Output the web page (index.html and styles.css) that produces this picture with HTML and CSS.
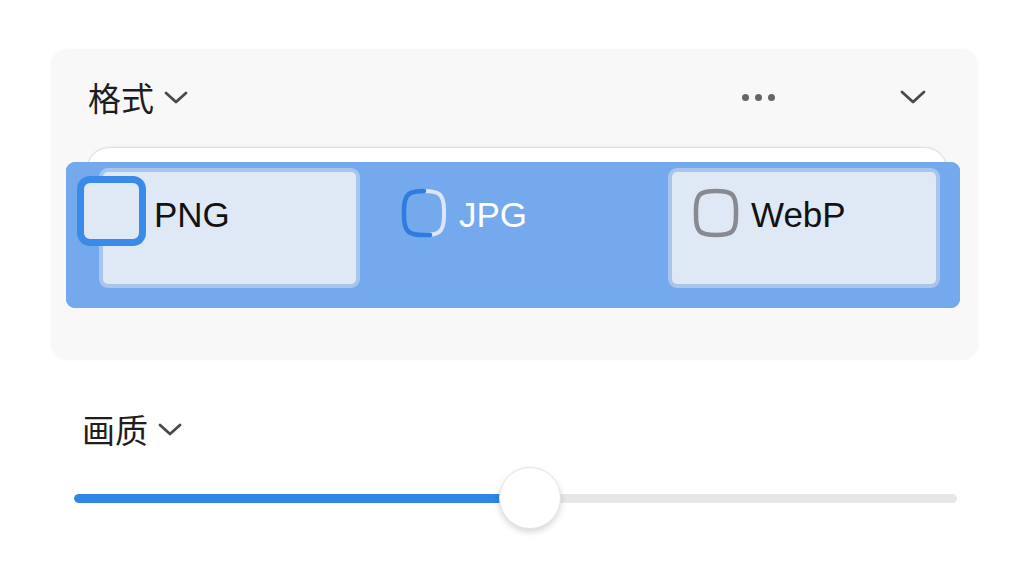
FILE: index.html
```html
<!DOCTYPE html>
<html lang="zh-CN">
<head>
<meta charset="utf-8">
<title>格式</title>
<link rel="stylesheet" href="styles.css">
</head>
<body>
<div class="page">
  <section class="card">
    <header class="card-head">
      <div class="title">格式
        <svg class="chev" width="24" height="14" viewBox="0 0 24 14"><path d="M2 2 L12 11 L22 2" fill="none" stroke="#4a4a4a" stroke-width="2.8" stroke-linecap="round" stroke-linejoin="round"/></svg>
      </div>
      <div class="head-actions">
        <span class="dots"><i></i><i></i><i></i></span>
        <svg class="chev-r" width="26" height="15" viewBox="0 0 26 15"><path d="M2 2 L13 12 L24 2" fill="none" stroke="#4a4a4a" stroke-width="2.8" stroke-linecap="round" stroke-linejoin="round"/></svg>
      </div>
    </header>
    <div class="options">
      <div class="opt opt-png">
        <span class="check"></span>
        <span class="opt-label dark">PNG</span>
      </div>
      <div class="opt opt-jpg">
        <svg class="radio" width="48" height="50" viewBox="0 0 48 50">
          <path d="M24 3 C38 3 44 5 44 22 L44 28 C44 45 38 47 24 47" fill="none" stroke="#dbe6f6" stroke-width="4"/>
          <path d="M24 3 C10 3 4 5 4 22 L4 28 C4 45 10 47 24 47 L30 47" fill="none" stroke="#2f7be0" stroke-width="4.5" stroke-linecap="round"/>
        </svg>
        <span class="opt-label light">JPG</span>
      </div>
      <div class="opt opt-webp">
        <svg class="radio" width="48" height="50" viewBox="0 0 48 50">
          <path d="M24 3 C40 3 44 6 44 22 L44 28 C44 44 40 47 24 47 C8 47 4 44 4 28 L4 22 C4 6 8 3 24 3 Z" fill="none" stroke="#878b91" stroke-width="4.5"/>
        </svg>
        <span class="opt-label dark">WebP</span>
      </div>
    </div>
  </section>

  <section class="quality">
    <div class="title title-q">画质
      <svg class="chev" width="24" height="14" viewBox="0 0 24 14"><path d="M2 2 L12 11 L22 2" fill="none" stroke="#4a4a4a" stroke-width="2.8" stroke-linecap="round" stroke-linejoin="round"/></svg>
    </div>
    <div class="slider">
      <div class="track"><div class="fill" style="width:456px"></div></div>
      <div class="thumb" style="left:425px"></div>
    </div>
  </section>
</div>
</body>
</html>
```

FILE: styles.css
```css
html, body {
  margin: 0;
  padding: 0;
  background: #ffffff;
}
body {
  font-family: "Liberation Sans", "Noto Sans CJK SC", sans-serif;
  color: #1a1a1a;
}
.page {
  width: 1024px;
  height: 576px;
  padding-top: 49px;
  box-sizing: border-box;
  overflow: hidden;
}
.card {
  margin-left: 51px;
  width: 927px;
  height: 311px;
  box-sizing: border-box;
  background: #f8f8f8;
  border-radius: 16px;
  box-shadow: 0 0 3px rgba(0,0,0,0.03);
  padding-top: 28px;
}
.card-head {
  display: flex;
  align-items: center;
  justify-content: space-between;
  padding: 0 52px 0 37px;
  height: 40px;
}
.title {
  display: flex;
  align-items: center;
  gap: 10px;
  font-family: "Noto Sans CJK SC", "Liberation Sans", sans-serif;
  font-size: 33px;
  line-height: 40px;
  color: #1e1e1e;
}
.chev {
  margin-top: 2px;
}
.head-actions {
  display: flex;
  align-items: center;
  gap: 125px;
}
.dots {
  display: flex;
  gap: 6px;
}
.dots i {
  width: 7px;
  height: 7px;
  border-radius: 50%;
  background: #666;
  display: block;
}
.options {
  position: relative;
  margin: 45px 18px 0 15px;
  height: 146px;
  box-sizing: border-box;
  background: #74a9ee;
  border-radius: 9px;
  display: flex;
  align-items: flex-start;
  padding: 6px 20px 0 33px;
}
.options::before {
  content: "";
  position: absolute;
  left: 20px;
  right: 12px;
  top: -15px;
  height: 60px;
  background: #ffffff;
  border: 1px solid #e0e0e0;
  border-bottom: none;
  border-radius: 24px 24px 0 0;
  box-shadow: 0 -1px 2px rgba(0,0,0,0.04);
  z-index: 0;
}
.options::after {
  content: "";
  position: absolute;
  inset: 0;
  background: #74a9ee;
  border-radius: 9px;
  z-index: 0;
}
.opt {
  position: relative;
  z-index: 1;
  display: flex;
  align-items: flex-start;
  box-sizing: border-box;
}
.opt-png, .opt-webp {
  height: 120px;
  background: #dfe8f5;
  border: 4px solid #a8c5ec;
  border-radius: 9px;
}
.opt-png {
  width: 261px;
  padding-top: 4px;
}
.check {
  width: 69px;
  height: 70px;
  box-sizing: border-box;
  margin-left: -26px;
  border: 7px solid #3a8be9;
  border-radius: 13px;
  background: #dfe8f5;
  flex-shrink: 0;
}
.opt-png .opt-label {
  margin-left: 8px;
  margin-top: 19px;
}
.opt-jpg {
  flex: 1;
  padding: 20px 0 0 40px;
}
.opt-webp {
  width: 272px;
  padding: 16px 0 0 20px;
}
.radio {
  flex-shrink: 0;
  display: block;
}
.opt-jpg .opt-label,
.opt-webp .opt-label {
  margin-left: 11px;
  margin-top: 7px;
}
.opt-label {
  font-size: 35px;
  line-height: 40px;
  letter-spacing: 0;
}
.dark { color: #121212; }
.light { color: #ffffff; }

.quality {
  margin-left: 74px;
  width: 883px;
  margin-top: 49px;
}
.title-q {
  padding-left: 8px;
}
.slider {
  position: relative;
  height: 62px;
  margin-top: 18px;
  display: flex;
  align-items: center;
}
.track {
  width: 100%;
  height: 9px;
  border-radius: 5px;
  background: #e7e7e7;
  overflow: hidden;
}
.fill {
  height: 100%;
  background: #2f86e6;
  border-radius: 5px 0 0 5px;
}
.thumb {
  position: absolute;
  top: 0;
  width: 62px;
  height: 62px;
  box-sizing: border-box;
  border-radius: 50%;
  background: #ffffff;
  border: 1px solid #e4e4e4;
  box-shadow: 0 3px 6px rgba(0,0,0,0.16);
}
```
